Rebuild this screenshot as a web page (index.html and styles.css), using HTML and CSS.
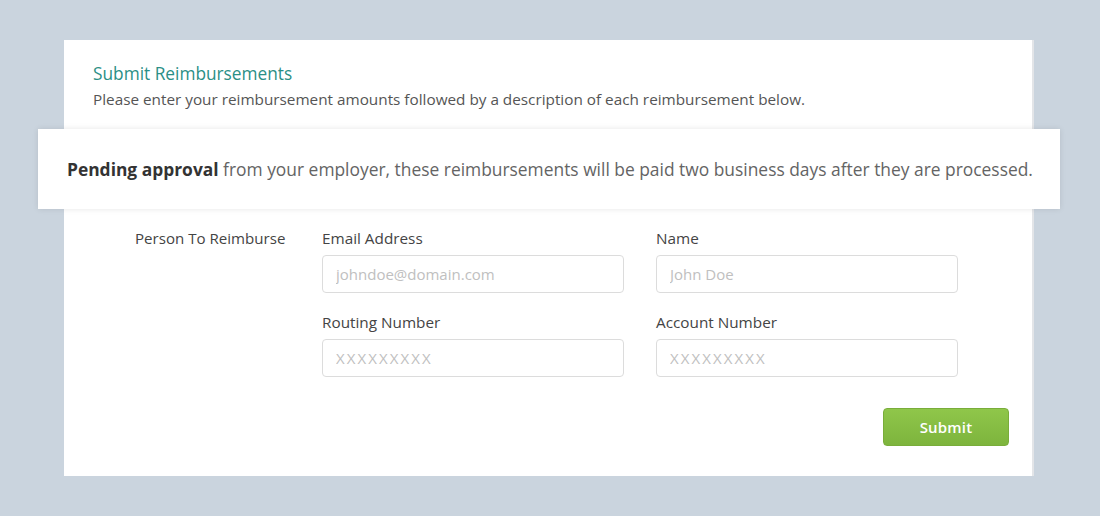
FILE: index.html
```html
<!DOCTYPE html>
<html>
<head>
<meta charset="utf-8">
<link rel="stylesheet" href="styles.css">
</head>
<body>
<div class="page">
  <div class="card">
    <div class="header">
      <h1 class="title">Submit Reimbursements</h1>
      <p class="subtitle">Please enter your reimbursement amounts followed by a description of each reimbursement below.</p>
    </div>
    <div class="banner">
      <p><strong>Pending approval</strong> from your employer, these reimbursements will be paid two business days after they are processed.</p>
    </div>
    <form class="form">
      <div class="section-label">Person To Reimburse</div>
      <div class="fields">
        <label class="field">
          <span class="field-label">Email Address</span>
          <input class="input" type="text" placeholder="johndoe@domain.com">
        </label>
        <label class="field">
          <span class="field-label">Name</span>
          <input class="input" type="text" placeholder="John Doe">
        </label>
        <label class="field">
          <span class="field-label">Routing Number</span>
          <input class="input mask" type="text" placeholder="XXXXXXXXX">
        </label>
        <label class="field">
          <span class="field-label">Account Number</span>
          <input class="input mask" type="text" placeholder="XXXXXXXXX">
        </label>
      </div>
    </form>
    <div class="actions">
      <button class="submit" type="button">Submit</button>
    </div>
  </div>
</div>
</body>
</html>
```
FILE: styles.css
```css
* { box-sizing: border-box; }
html, body {
  margin: 0;
  padding: 0;
  background: #cad4de;
  font-family: "Open Sans", Lato, sans-serif;
}
.page {
  padding: 40px 0 0 64px;
  height: 516px;
}
.card {
  width: 970px;
  height: 436px;
  background: #fff;
  border-right: 2px solid #e3e5e8;
  display: flex;
  flex-direction: column;
}
.header {
  padding: 23px 0 0 29px;
}
.title {
  margin: 0;
  font-size: 17.3px;
  line-height: 22px;
  font-weight: 400;
  color: #2b8f86;
}
.subtitle {
  margin: 4px 0 0;
  font-size: 15.3px;
  line-height: 20px;
  color: #555;
}
.banner {
  margin: 20px -28px 0 -26px;
  height: 80px;
  background: #fff;
  box-shadow: 0 0 6px rgba(0,0,0,0.10);
  display: flex;
  align-items: center;
  padding-left: 29px;
}
.banner p {
  margin: 0;
  font-size: 17.4px;
  color: #646464;
}
.banner strong {
  color: #333;
  font-weight: 700;
}
.form {
  display: flex;
  padding: 20px 0 0 71px;
  margin: 0;
}
.section-label {
  width: 187px;
  font-size: 15.1px;
  line-height: 18px;
  color: #444;
}
.fields {
  display: grid;
  grid-template-columns: 302px 302px;
  column-gap: 32px;
  row-gap: 20px;
}
.field {
  display: flex;
  flex-direction: column;
}
.field-label {
  font-size: 15.3px;
  line-height: 18px;
  color: #444;
  margin-bottom: 8px;
}
.input {
  width: 302px;
  height: 38px;
  border: 1px solid #dcdcdc;
  border-radius: 4px;
  padding: 0 13px;
  font-family: inherit;
  font-size: 15px;
  color: #333;
  outline: none;
}
.input::placeholder {
  color: #c0c0c0;
}
.mask::placeholder {
  letter-spacing: 2.1px;
}
.actions {
  display: flex;
  justify-content: flex-end;
  padding: 31px 23px 0 0;
}
.submit {
  width: 126px;
  height: 38px;
  border: 1px solid #79ad3a;
  border-radius: 4px;
  background: linear-gradient(#8fc64a, #7db43d);
  color: #fff;
  font-family: inherit;
  font-size: 15px;
  font-weight: 600;
  letter-spacing: 0.2px;
  cursor: pointer;
}
```
